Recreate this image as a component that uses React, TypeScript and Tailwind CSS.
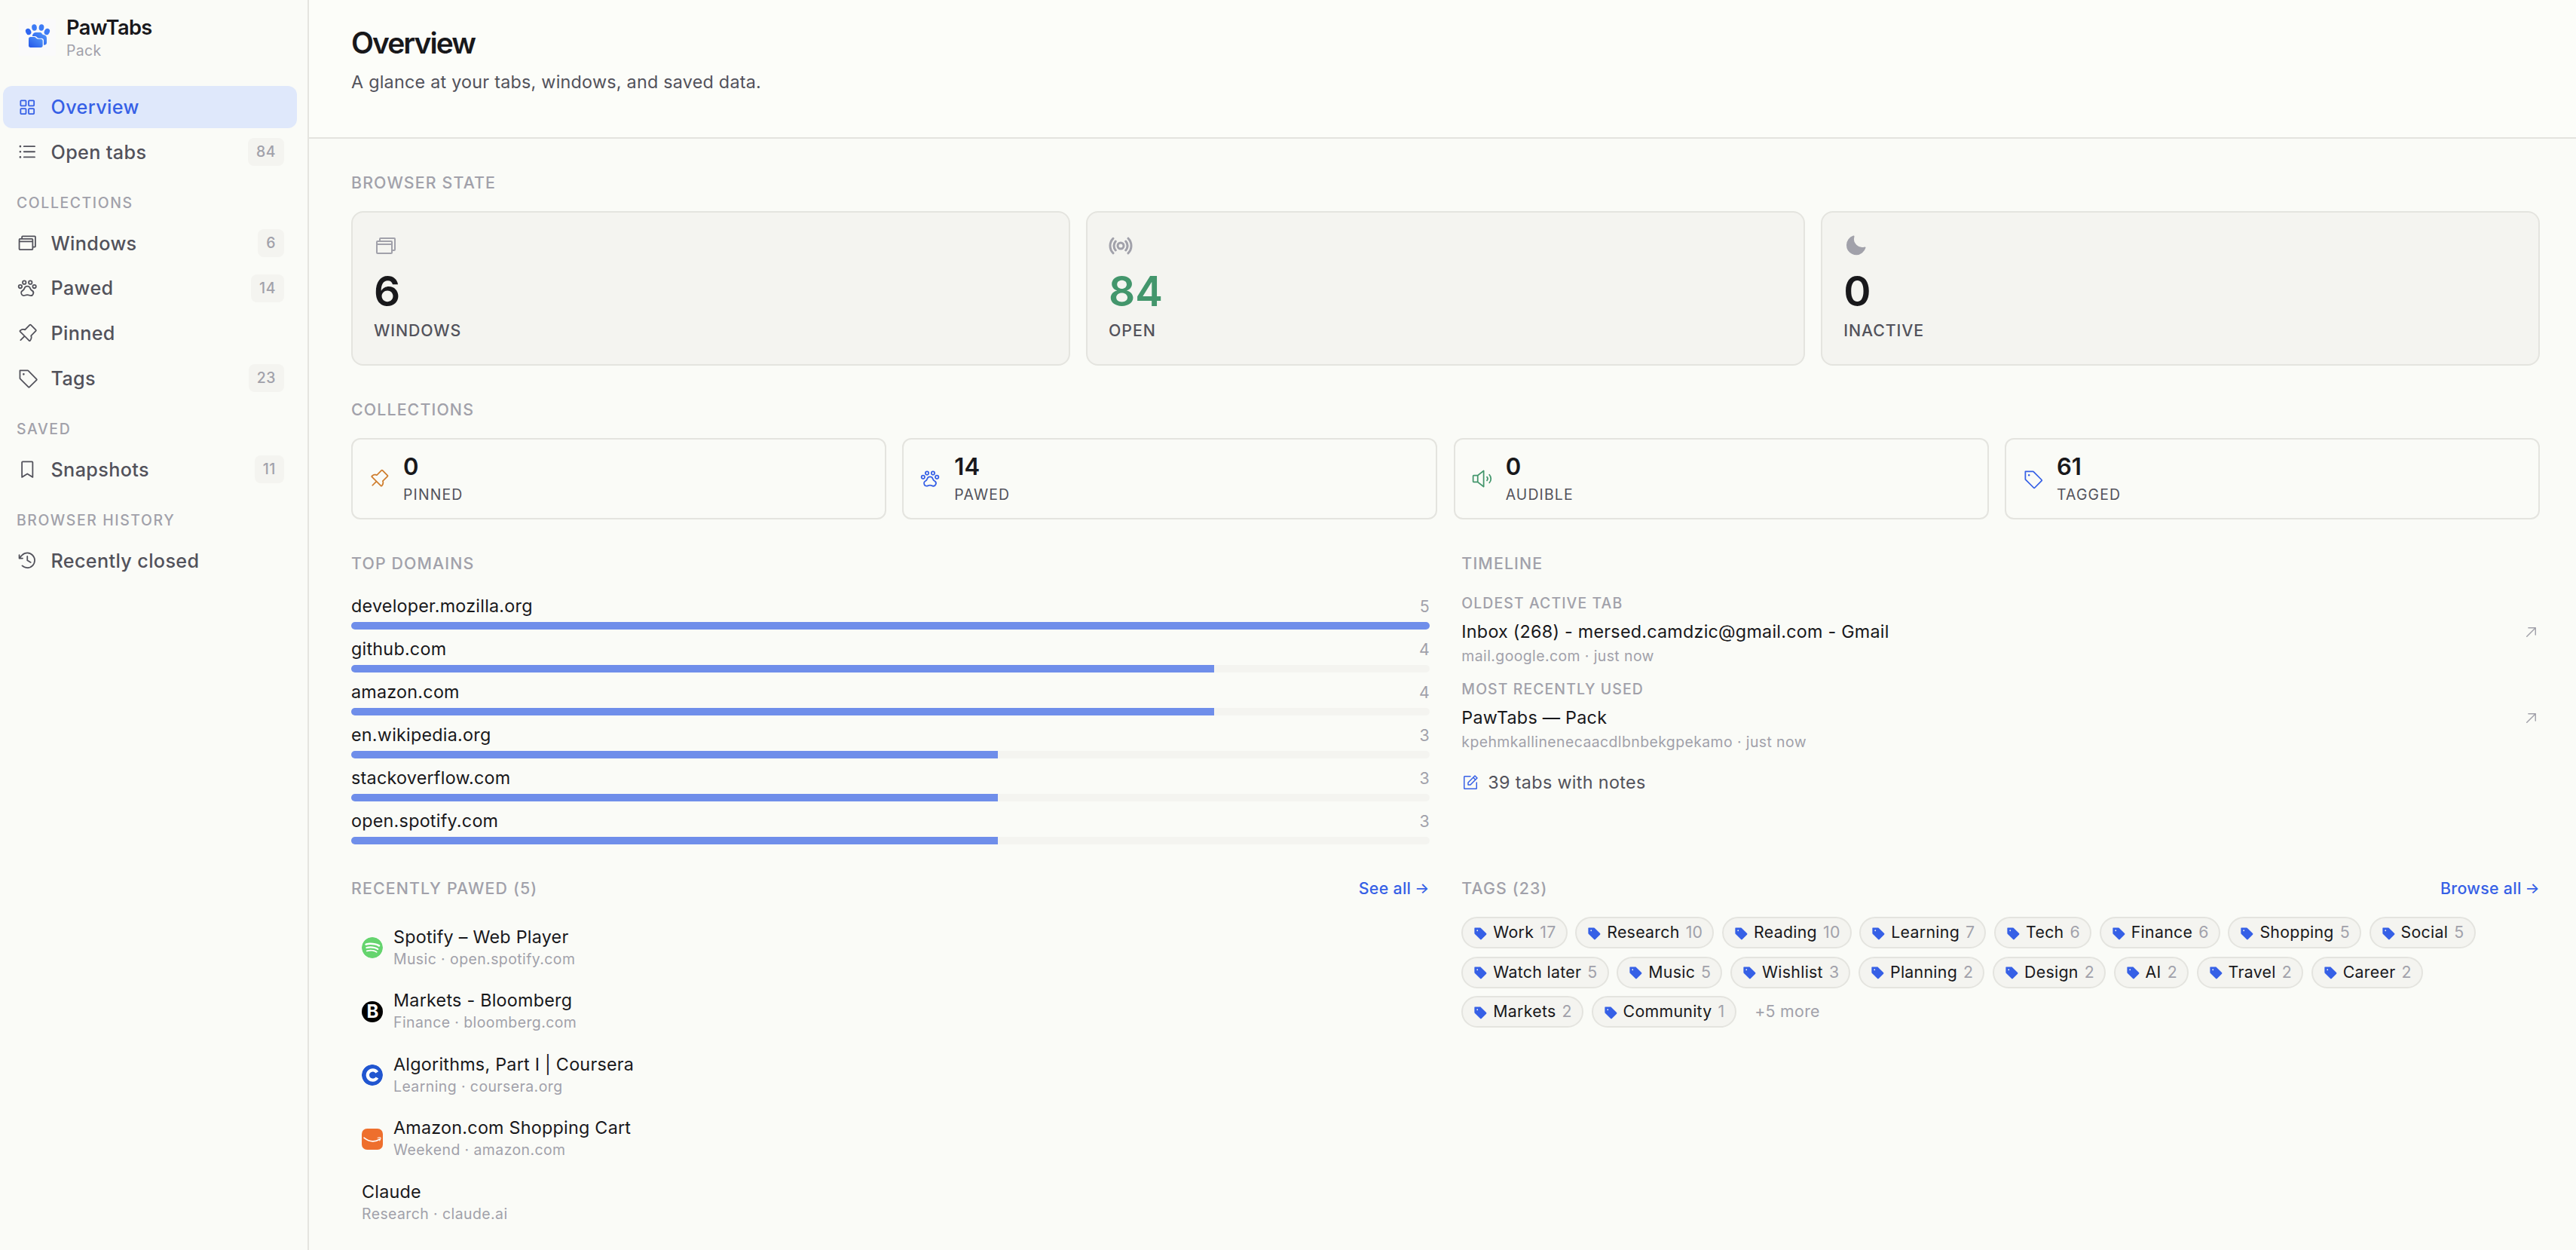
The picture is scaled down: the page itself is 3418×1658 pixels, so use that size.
import React from 'react';
import type { IconType } from 'react-icons';
import {
  PiArrowUpRight,
  PiBookmarkSimple,
  PiBroadcastBold,
  PiBrowsers,
  PiClockCounterClockwise,
  PiListBullets,
  PiMoonFill,
  PiNotePencil,
  PiPawPrint,
  PiPushPin,
  PiSpeakerHigh,
  PiSquaresFour,
  PiTag,
  PiTagFill,
} from 'react-icons/pi';
import { SiCoursera, SiSpotify } from 'react-icons/si';

const Logo = () => (
  <svg width="49" height="49" viewBox="0 0 147 147" className="shrink-0 bg-[#fafafb]">
    <defs>
      <linearGradient id="paw" x1="0" y1="1" x2="1" y2="0">
        <stop offset="0" stopColor="#2355e8" />
        <stop offset="1" stopColor="#559bfb" />
      </linearGradient>
    </defs>
    <ellipse cx="38" cy="51" rx="10.5" ry="13" transform="rotate(-25 38 51)" fill="#2f66f0" />
    <ellipse cx="61.5" cy="34.5" rx="10" ry="12.5" transform="rotate(-8 61.5 34.5)" fill="#3d7bf5" />
    <ellipse cx="90" cy="34.5" rx="10" ry="12.5" transform="rotate(8 90 34.5)" fill="#3d7bf5" />
    <ellipse cx="112" cy="51" rx="10.5" ry="13" transform="rotate(25 112 51)" fill="#3d7bf5" />
    <path
      d="M54 66C56 58 61 54 68 54H86C91 54 92 62 97 63C106 64 111 69 111 76V95C111 100 107 104 99 104L99 84Q98 78 91 77H80Q75 77 70 71Q68 69 64 69H54Z"
      fill="url(#paw)"
    />
    <path
      d="M39 80Q39 72 47 72H61Q65 72 68 76Q71 80 76 80H87Q95 80 95 88V106Q95 114 87 114H47Q39 114 39 106Z"
      fill="url(#paw)"
    />
  </svg>
);

const BloombergIcon = () => (
  <div className="flex size-7 items-center justify-center rounded-full bg-black pl-px text-[24px] leading-7 font-bold text-white">
    B
  </div>
);

const AmazonIcon = () => (
  <svg width="28" height="28" viewBox="0 0 28 28">
    <rect width="28" height="28" rx="7" fill="#ee6f2d" />
    <path d="M3 12.2Q13.5 20.5 23.5 14.2" fill="none" stroke="#fff" strokeWidth="1.6" strokeLinecap="round" />
    <path d="M21.2 12.3Q24.5 11.4 25 12.2Q25.3 13.6 23.7 16" fill="none" stroke="#fff" strokeWidth="1.1" strokeLinecap="round" />
  </svg>
);

type NavEntry = { label: string; icon: IconType; count?: number; active?: boolean };

const navGroups: { title?: string; items: NavEntry[] }[] = [
  {
    items: [
      { label: 'Overview', icon: PiSquaresFour, active: true },
      { label: 'Open tabs', icon: PiListBullets, count: 84 },
    ],
  },
  {
    title: 'Collections',
    items: [
      { label: 'Windows', icon: PiBrowsers, count: 6 },
      { label: 'Pawed', icon: PiPawPrint, count: 14 },
      { label: 'Pinned', icon: PiPushPin },
      { label: 'Tags', icon: PiTag, count: 23 },
    ],
  },
  { title: 'Saved', items: [{ label: 'Snapshots', icon: PiBookmarkSimple, count: 11 }] },
  { title: 'Browser history', items: [{ label: 'Recently closed', icon: PiClockCounterClockwise }] },
];

const stateCards = [
  { label: 'Windows', value: 6, icon: PiBrowsers, color: 'text-[#18181b]' },
  { label: 'Open', value: 84, icon: PiBroadcastBold, color: 'text-[#43966c]' },
  { label: 'Inactive', value: 0, icon: PiMoonFill, color: 'text-[#18181b]' },
];

const collectionCards = [
  { label: 'Pinned', value: 0, icon: PiPushPin, color: 'text-[#cf7e2e]' },
  { label: 'Pawed', value: 14, icon: PiPawPrint, color: 'text-[#3660e6]' },
  { label: 'Audible', value: 0, icon: PiSpeakerHigh, color: 'text-[#43966c]' },
  { label: 'Tagged', value: 61, icon: PiTag, color: 'text-[#3660e6]' },
];

const domains = [
  { name: 'developer.mozilla.org', count: 5 },
  { name: 'github.com', count: 4 },
  { name: 'amazon.com', count: 4 },
  { name: 'en.wikipedia.org', count: 3 },
  { name: 'stackoverflow.com', count: 3 },
  { name: 'open.spotify.com', count: 3 },
];

const timeline = [
  { label: 'Oldest active tab', title: 'Inbox (268) - mersed.camdzic@gmail.com - Gmail', meta: 'mail.google.com · just now' },
  { label: 'Most recently used', title: 'PawTabs — Pack', meta: 'kpehmkallinenecaacdlbnbekgpekamo · just now' },
];

const recent = [
  {
    title: 'Spotify – Web Player',
    meta: 'Music · open.spotify.com',
    icon: <SiSpotify size={28} className="rounded-full bg-white text-[#65d46e]" />,
  },
  { title: 'Markets - Bloomberg', meta: 'Finance · bloomberg.com', icon: <BloombergIcon /> },
  {
    title: 'Algorithms, Part I | Coursera',
    meta: 'Learning · coursera.org',
    icon: <SiCoursera size={28} className="rounded-full bg-white text-[#2156d0]" />,
  },
  { title: 'Amazon.com Shopping Cart', meta: 'Weekend · amazon.com', icon: <AmazonIcon /> },
  { title: 'Claude', meta: 'Research · claude.ai', icon: null },
];

const tags: [string, number][] = [
  ['Work', 17],
  ['Research', 10],
  ['Reading', 10],
  ['Learning', 7],
  ['Tech', 6],
  ['Finance', 6],
  ['Shopping', 5],
  ['Social', 5],
  ['Watch later', 5],
  ['Music', 5],
  ['Wishlist', 3],
  ['Planning', 2],
  ['Design', 2],
  ['AI', 2],
  ['Travel', 2],
  ['Career', 2],
  ['Markets', 2],
  ['Community', 1],
];

const SectionTitle = ({ children, link }: { children: React.ReactNode; link?: string }) => (
  <div className="mb-6 flex h-7 items-center justify-between leading-7">
    <h2 className="text-[21.3px] font-medium tracking-[0.054em] text-[#a1a1aa] uppercase">{children}</h2>
    {link && (
      <a className="flex items-center gap-[5px] text-[21.3px] font-medium tracking-[0.015em] text-[#3660e6]">
        {link}
        <span className="text-[20px]">→</span>
      </a>
    )}
  </div>
);

const Sidebar = () => (
  <aside className="w-[410px] shrink-0 border-r-2 border-[#e4e4df] bg-[#fafbf7]">
    <div className="flex h-[114px] items-start gap-3.5 pt-[25px] pl-[25px]">
      <Logo />
      <div className="-mt-[5px]">
        <div className="h-[34px] text-[27.2px] leading-[34px] font-semibold tracking-[-0.022em] text-[#18181b]">PawTabs</div>
        <div className="h-[26px] text-[19.4px] leading-[26px] tracking-[0.02em] text-[#a1a1aa]">Pack</div>
      </div>
    </div>
    <nav className="pr-3.5 pl-1">
      {navGroups.map((group, index) => (
        <div key={index}>
          {group.title && (
            <div className="flex h-[65.33px] items-center pt-4 pl-[18px] text-[19.4px] font-medium tracking-[0.083em] text-[#a1a1aa] uppercase">
              {group.title}
            </div>
          )}
          <div className="flex flex-col gap-1">
            {group.items.map(({ label, icon: Icon, count, active }) => (
              <div
                key={label}
                className={`flex h-[55.67px] items-center gap-[17.5px] rounded-xl pr-[17px] pl-[17.5px] ${
                  active ? 'bg-[#dfe8fb] text-[#3660e6]' : 'text-[#52525b]'
                }`}
              >
                <Icon size={28.5} />
                <span className="flex-1 pt-0.5 text-[25.2px] font-medium tracking-[0.014em]">{label}</span>
                {count !== undefined && (
                  <span className="flex h-[37px] items-center rounded-lg bg-[#f4f4f0] px-[11px] text-[19.4px] font-medium tracking-[0.03em] text-[#a1a1aa]">
                    {count}
                  </span>
                )}
              </div>
            ))}
          </div>
        </div>
      ))}
    </nav>
  </aside>
);

const StateCards = () => (
  <div className="grid grid-cols-3 gap-[21.33px]">
    {stateCards.map(({ label, value, icon: Icon, color }) => (
      <div key={label} className="h-[205px] rounded-2xl border-2 border-[#e4e4df] bg-[#f4f4f0] p-7">
        <Icon size={32} className="text-[#a1a1aa]" />
        <div className={`mt-4 h-14 text-[55px] leading-[56px] font-semibold ${color}`}>{value}</div>
        <div className="mt-2.5 h-7 text-[21.3px] leading-7 font-medium tracking-[0.043em] text-[#52525b] uppercase">{label}</div>
      </div>
    ))}
  </div>
);

const CollectionCards = () => (
  <div className="grid grid-cols-4 gap-[21.33px]">
    {collectionCards.map(({ label, value, icon: Icon, color }) => (
      <div key={label} className="flex h-[108px] items-center gap-[18px] rounded-xl border-2 border-[#e4e4df] px-[21px]">
        <Icon size={28} className={color} />
        <div>
          <div className="h-9 text-[31px] leading-9 font-semibold text-[#18181b]">{value}</div>
          <div className="mt-[5px] h-7 text-[19.4px] leading-7 tracking-[0.06em] text-[#52525b] uppercase">{label}</div>
        </div>
      </div>
    ))}
  </div>
);

const TopDomains = () => (
  <div className="flex flex-col gap-[7px]">
    {domains.map((domain) => (
      <div key={domain.name}>
        <div className="flex h-[38px] items-center justify-between pt-px">
          <span className="text-[23.3px] tracking-[0.011em] text-[#18181b]">{domain.name}</span>
          <span className="text-[21.3px] text-[#a1a1aa]">{domain.count}</span>
        </div>
        <div className="mt-0.5 h-2.5 overflow-hidden rounded-full bg-[#f4f4f0]">
          <div className="h-full bg-[#6f8eea]" style={{ width: `${(domain.count / 5) * 100}%` }} />
        </div>
      </div>
    ))}
  </div>
);

const Timeline = () => (
  <div>
    <div className="flex flex-col gap-[15px]">
      {timeline.map((entry) => (
        <div key={entry.label}>
          <div className="h-[30px] text-[19.4px] leading-[30px] font-medium tracking-[0.057em] text-[#a1a1aa] uppercase">
            {entry.label}
          </div>
          <div className="mt-[7px] flex h-8 items-center justify-between">
            <span className="text-[23.3px] tracking-[0.011em] text-[#18181b]">{entry.title}</span>
            <PiArrowUpRight size={23} className="text-[#a1a1aa]" />
          </div>
          <div className="mt-[2px] h-7 text-[19.4px] leading-7 tracking-[0.022em] text-[#a1a1aa]">{entry.meta}</div>
        </div>
      ))}
    </div>
    <div className="mt-6 flex h-8 items-center gap-[11px] text-[#52525b]">
      <PiNotePencil size={24} className="text-[#3660e6]" />
      <span className="text-[23.3px] tracking-[0.015em]">39 tabs with notes</span>
    </div>
  </div>
);

const RecentlyPawed = () => (
  <div className="-mt-px">
    {recent.map((tab) => (
      <div key={tab.title} className="flex h-[84.5px] items-center gap-3.5 pl-3.5">
        {tab.icon}
        <div>
          <div className="h-[30px] text-[23.3px] leading-[30px] tracking-[0.011em] text-[#18181b]">{tab.title}</div>
          <div className="h-[29px] text-[19.4px] leading-[29px] tracking-[0.023em] text-[#a1a1aa]">{tab.meta}</div>
        </div>
      </div>
    ))}
  </div>
);

const TagCloud = () => (
  <div className="flex flex-wrap gap-[10.67px] text-[21.3px] tracking-[0.014em]">
    {tags.map(([name, count]) => (
      <span key={name} className="flex h-[42px] items-center gap-2 rounded-full border-2 border-[#e4e4df] bg-[#f4f4f0] px-[13px]">
        <PiTagFill size={19} className="text-[#3660e6]" />
        <span className="text-[#18181b]">{name}</span>
        <span className="text-[#a1a1aa]">{count}</span>
      </span>
    ))}
    <span className="flex h-[42px] items-center px-[14px] text-[#a1a1aa]">+5 more</span>
  </div>
);

export default function App() {
  return (
    <div className="flex h-[1658px] w-full overflow-hidden bg-[#fafbf7] font-['Inter',sans-serif]">
      <Sidebar />
      <main className="min-w-0 flex-1">
        <header className="h-[184px] border-b-2 border-[#e4e4df] bg-[#fcfdf9] pt-[33px] pl-14">
          <h1 className="h-12 text-[39px] leading-[48px] font-semibold tracking-[-0.05em] text-[#18181b]">Overview</h1>
          <p className="mt-3 h-8 text-[23.3px] leading-8 tracking-[0.011em] text-[#52525b]">
            A glance at your tabs, windows, and saved data.
          </p>
        </header>
        <div className="flex flex-col gap-11 pt-11 pr-12 pl-14">
          <section>
            <SectionTitle>Browser state</SectionTitle>
            <StateCards />
          </section>
          <section>
            <SectionTitle>Collections</SectionTitle>
            <CollectionCards />
          </section>
          <div className="grid grid-cols-2 gap-x-[42.67px] gap-y-11">
            <section>
              <SectionTitle>Top domains</SectionTitle>
              <TopDomains />
            </section>
            <section>
              <SectionTitle>Timeline</SectionTitle>
              <Timeline />
            </section>
            <section>
              <SectionTitle link="See all">Recently pawed (5)</SectionTitle>
              <RecentlyPawed />
            </section>
            <section>
              <SectionTitle link="Browse all">Tags (23)</SectionTitle>
              <TagCloud />
            </section>
          </div>
        </div>
      </main>
    </div>
  );
}
